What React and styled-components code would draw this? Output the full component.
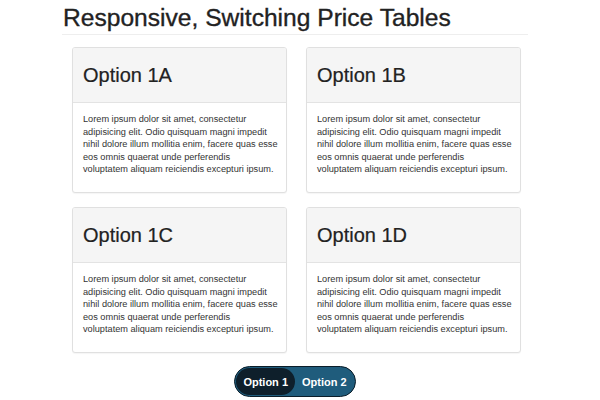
import React, { useState } from "react";
import styled, { createGlobalStyle } from "styled-components";

const GlobalStyle = createGlobalStyle`
  body {
    margin: 0;
    background: #fff;
    font-family: "Liberation Sans", Arial, sans-serif;
    color: #333;
  }
`;

const Page = styled.div`
  width: 466px;
  margin-left: 62px;
  padding-top: 3px;
`;

const Title = styled.h1`
  margin: 0;
  padding: 0 0 1px 1px;
  font-size: 24.6px;
  font-weight: 400;
  line-height: 30px;
  color: #222;
  -webkit-text-stroke: 0.35px #222;
  border-bottom: 1px solid #eee;
`;

const Grid = styled.div`
  display: grid;
  grid-template-columns: 215px 215px;
  column-gap: 19px;
  row-gap: 14px;
  padding: 12px 0 0 10px;
`;

const Card = styled.div`
  border: 1px solid #e0e0e0;
  border-radius: 3px;
  box-shadow: 0 1px 1px rgba(0, 0, 0, 0.04);
  background: #fff;
  height: 146px;
  box-sizing: border-box;
  overflow: hidden;
`;

const CardHead = styled.div`
  height: 54px;
  display: flex;
  align-items: center;
  padding: 0 10px;
  background: #f5f5f5;
  border-bottom: 1px solid #e3e3e3;
  font-size: 20px;
  color: #222;
  -webkit-text-stroke: 0.2px #222;
`;

const CardBody = styled.p`
  margin: 0;
  padding: 10px 8px 0 10px;
  font-size: 9.2px;
  line-height: 12.6px;
  color: #333;
`;

const Line = styled.span`
  display: block;
  white-space: nowrap;
`;

const Switch = styled.div`
  display: flex;
  width: max-content;
  margin: 13px auto 0;
  padding: 1px;
  border-radius: 16px;
  background: #1f5c7c;
  border: 1.5px solid #0a1d29;
`;

const SwitchOption = styled.button`
  border: none;
  font-family: inherit;
  font-size: 11px;
  font-weight: 700;
  color: #fff;
  height: 27px;
  padding: 0 7px;
  border-radius: 14px;
  background: ${(p) => (p.$active ? "#0e1f2b" : "transparent")};
  cursor: pointer;
`;

const lorem = [
  "Lorem ipsum dolor sit amet, consectetur",
  "adipisicing elit. Odio quisquam magni impedit",
  "nihil dolore illum mollitia enim, facere quas esse",
  "eos omnis quaerat unde perferendis",
  "voluptatem aliquam reiciendis excepturi ipsum.",
];

export default function App() {
  const [set, setSet] = useState(1);
  const names = ["A", "B", "C", "D"];
  return (
    <Page>
      <GlobalStyle />
      <Title>Responsive, Switching Price Tables</Title>
      <Grid>
        {names.map((n) => (
          <Card key={n}>
            <CardHead>
              Option {set}
              {n}
            </CardHead>
            <CardBody>
              {lorem.map((l) => (
                <Line key={l}>{l}</Line>
              ))}
            </CardBody>
          </Card>
        ))}
      </Grid>
      <Switch>
        <SwitchOption $active={set === 1} onClick={() => setSet(1)}>
          Option 1
        </SwitchOption>
        <SwitchOption $active={set === 2} onClick={() => setSet(2)}>
          Option 2
        </SwitchOption>
      </Switch>
    </Page>
  );
}
